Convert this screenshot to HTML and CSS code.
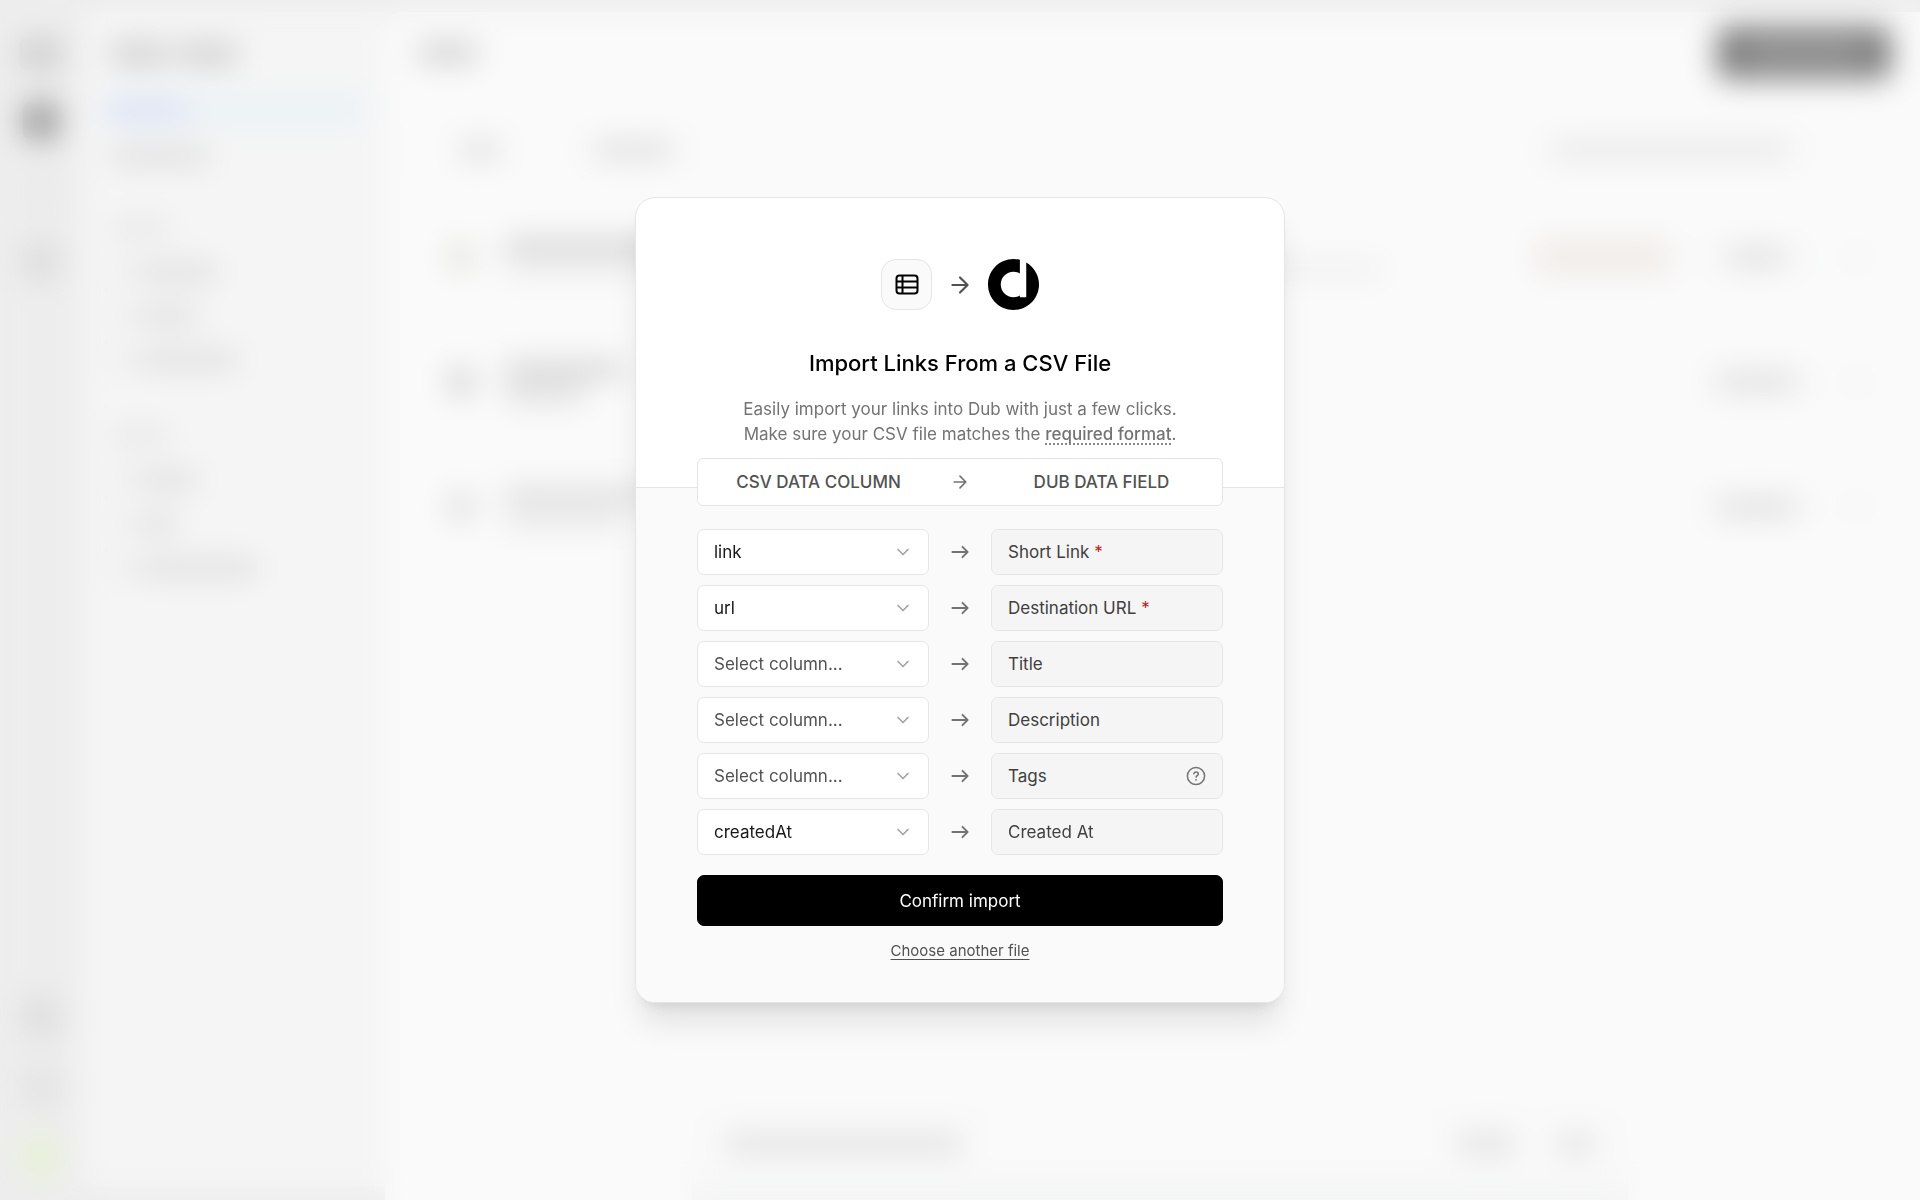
FILE: index.html
```html
<!DOCTYPE html>
<html lang="en">
<head>
<meta charset="UTF-8">
<meta name="viewport" content="width=device-width, initial-scale=1.0">
<title>Import Links From a CSV File</title>
<link rel="stylesheet" href="styles.css">
</head>
<body>

<!-- placeholder app behind the modal -->
<div class="app" aria-hidden="true">
    <div class="rail">
        <span class="blob logo"></span>
        <span class="blob active"></span>
        <span class="blob faint"></span>
        <span class="blob"></span>
        <span class="rail-space"></span>
        <span class="blob"></span>
        <span class="blob light"></span>
        <span class="blob avatar"></span>
    </div>
    <div class="sidebar">
        <div class="side-title"><span class="bar dark w60"></span><span class="bar dark w60"></span></div>
        <div class="side-item current"><span class="bar blue w80"></span></div>
        <div class="side-item"><span class="bar w100"></span></div>
        <div class="side-label"><span class="bar pale w60"></span></div>
        <div class="side-item"><span class="icon"></span><span class="bar w80"></span></div>
        <div class="side-item"><span class="icon"></span><span class="bar w60"></span></div>
        <div class="side-item"><span class="icon"></span><span class="bar w100"></span></div>
        <div class="side-label second"><span class="bar pale w60"></span></div>
        <div class="side-item"><span class="icon"></span><span class="bar w60"></span></div>
        <div class="side-item"><span class="icon"></span><span class="bar w40"></span></div>
        <div class="side-item"><span class="icon"></span><span class="bar w120"></span></div>
    </div>
    <div class="main">
        <div class="topbar">
            <span class="bar dark w60"></span>
            <span class="create"><span class="bar white w120"></span></span>
        </div>
        <div class="filters">
            <span class="filter"><span class="bar w40"></span></span>
            <span class="filter"><span class="bar w80"></span></span>
            <span class="search"><span class="bar pale w240"></span></span>
            <span class="more"></span>
        </div>
        <div class="link-row">
            <span class="thumb tan"></span>
            <div class="link-text"><span class="bar dark w200"></span><span class="bar long"></span></div>
            <span class="tag"></span>
            <span class="clicks"><span class="bar w60"></span></span>
            <span class="dots"></span>
        </div>
        <div class="link-row">
            <span class="thumb"></span>
            <div class="link-text"><span class="bar dark w120"></span><span class="bar w80"></span></div>
            <span class="clicks"><span class="bar w80"></span></span>
            <span class="dots"></span>
        </div>
        <div class="link-row">
            <span class="thumb grey"></span>
            <div class="link-text"><span class="bar w200"></span><span class="bar pale w120"></span></div>
            <span class="clicks"><span class="bar w80"></span></span>
            <span class="dots"></span>
        </div>
        <div class="pager">
            <span class="bar w240"></span>
            <span class="pager-space"></span>
            <span class="bar w60"></span>
            <span class="bar w40"></span>
        </div>
    </div>
</div>

<svg class="sprite" aria-hidden="true">
    <symbol id="arrow" viewBox="0 0 18 18">
        <path d="M2.75 9h12.5M11 4.75 15.25 9 11 13.25" fill="none" stroke="currentColor" stroke-width="1.5" stroke-linecap="round" stroke-linejoin="round"/>
    </symbol>
    <symbol id="arrow-bold" viewBox="0 0 24 24">
        <path d="M5 12h14M12 5l7 7-7 7" fill="none" stroke="currentColor" stroke-width="2" stroke-linecap="round" stroke-linejoin="round"/>
    </symbol>
    <symbol id="chevron" viewBox="0 0 24 24">
        <path d="m6 9 6 6 6-6" fill="none" stroke="currentColor" stroke-width="2" stroke-linecap="round" stroke-linejoin="round"/>
    </symbol>
</svg>

<div class="overlay">
    <div class="modal" role="dialog" aria-labelledby="modalTitle">
        <div class="modal-head">
            <div class="logos">
                <span class="file-icon">
                    <svg width="24" height="22" viewBox="0 0 24 22" fill="none" stroke="#000" stroke-width="2">
                        <rect x="1.5" y="1.5" width="21" height="18" rx="3"/>
                        <path d="M7.5 1.5v18M1.5 7.5h21M1.5 13.5h21"/>
                    </svg>
                </span>
                <svg class="logo-arrow" width="26" height="26"><use href="#arrow-bold"/></svg>
                <svg width="51" height="51" viewBox="0 0 64 64">
                    <path d="M32 64c17.673 0 32-14.327 32-32 0-11.844-6.435-22.186-16-27.719V48h-8v-2.14A15.93 15.93 0 0 1 32 48c-8.837 0-16-7.163-16-16s7.163-16 16-16c2.914 0 5.647.78 8 2.14V1.008A32 32 0 0 0 32 0C14.327 0 0 14.327 0 32s14.327 32 32 32Z"/>
                </svg>
            </div>
            <h3 id="modalTitle">Import Links From a CSV File</h3>
            <p>Easily import your links into Dub with just a few clicks.<br>
            Make sure your CSV file matches the <a href="#">required format</a>.</p>
        </div>

        <form class="modal-body">
            <div class="columns">
                <span>CSV DATA COLUMN</span>
                <svg class="arrow" width="20" height="20"><use href="#arrow-bold"/></svg>
                <span>DUB DATA FIELD</span>
            </div>

            <div class="fields">
                <div class="field-row">
                    <div class="select">
                        <select id="link"><option>link</option><option>url</option><option>createdAt</option></select>
                        <svg width="20" height="20"><use href="#chevron"/></svg>
                    </div>
                    <svg class="arrow" width="22" height="22"><use href="#arrow"/></svg>
                    <label for="link">Short Link <span class="required">*</span></label>
                </div>
                <div class="field-row">
                    <div class="select">
                        <select id="url"><option>url</option><option>link</option><option>createdAt</option></select>
                        <svg width="20" height="20"><use href="#chevron"/></svg>
                    </div>
                    <svg class="arrow" width="22" height="22"><use href="#arrow"/></svg>
                    <label for="url">Destination URL <span class="required">*</span></label>
                </div>
                <div class="field-row">
                    <div class="select">
                        <select id="title" class="empty"><option>Select column...</option></select>
                        <svg width="20" height="20"><use href="#chevron"/></svg>
                    </div>
                    <svg class="arrow" width="22" height="22"><use href="#arrow"/></svg>
                    <label for="title">Title</label>
                </div>
                <div class="field-row">
                    <div class="select">
                        <select id="description" class="empty"><option>Select column...</option></select>
                        <svg width="20" height="20"><use href="#chevron"/></svg>
                    </div>
                    <svg class="arrow" width="22" height="22"><use href="#arrow"/></svg>
                    <label for="description">Description</label>
                </div>
                <div class="field-row">
                    <div class="select">
                        <select id="tags" class="empty"><option>Select column...</option></select>
                        <svg width="20" height="20"><use href="#chevron"/></svg>
                    </div>
                    <svg class="arrow" width="22" height="22"><use href="#arrow"/></svg>
                    <label for="tags">Tags
                        <svg class="help" width="20" height="20" viewBox="0 0 20 20" fill="none" stroke="currentColor" stroke-width="1.5" stroke-linecap="round" stroke-linejoin="round">
                            <circle cx="10" cy="10" r="8.6"/>
                            <path d="M7.8 7.7C8.2 6.6 9 6.1 10.1 6.1c1.3 0 2.2.8 2.2 1.9 0 1.6-2.2 1.7-2.2 3.3"/>
                            <circle cx="10" cy="13.8" r=".9" fill="currentColor" stroke="none"/>
                        </svg>
                    </label>
                </div>
                <div class="field-row">
                    <div class="select">
                        <select id="createdAt"><option>createdAt</option><option>link</option><option>url</option></select>
                        <svg width="20" height="20"><use href="#chevron"/></svg>
                    </div>
                    <svg class="arrow" width="22" height="22"><use href="#arrow"/></svg>
                    <label for="createdAt">Created At</label>
                </div>
            </div>

            <button type="button" class="confirm">Confirm import</button>
            <button type="button" class="another">Choose another file</button>
        </form>
    </div>
</div>

</body>
</html>
```

FILE: styles.css
```css
* {
    box-sizing: border-box;
}
body {
    margin: 0;
    font-family: Inter, "Liberation Sans", sans-serif;
    font-size: 17px;
    color: #171717;
    background: #e5e5e5;
}
.sprite {
    display: none;
}

/* app behind the modal */
.app {
    display: flex;
    height: 100vh;
    padding-top: 12px;
    overflow: hidden;
}
.rail {
    display: flex;
    flex-direction: column;
    align-items: center;
    gap: 32px;
    width: 82px;
    padding: 26px 0 24px;
}
.blob {
    width: 36px;
    height: 38px;
    border-radius: 8px;
    background: #c4c4c4;
}
.blob.logo {
    height: 32px;
    width: 44px;
    background: #aaa;
}
.blob.active {
    background: #444;
}
.blob.faint {
    background: #e0e0e0;
}
.blob.light {
    background: #d0d0d0;
}
.blob.avatar {
    border-radius: 50%;
    background: #d6efaa;
}
.rail-space {
    flex: 1;
}
.sidebar {
    width: 303px;
    margin-bottom: 14px;
    padding: 18px 20px 0;
    border-radius: 16px 0 0 16px;
    background: #f5f5f5;
}
.bar {
    display: block;
    height: 16px;
    border-radius: 6px;
    background: #c0c0c0;
}
.bar.dark {
    background: #aaa;
}
.bar.pale {
    background: #d4d4d4;
}
.bar.white {
    background: #555;
}
.bar.blue {
    background: #b4c2f8;
}
.w40 { width: 40px; }
.w60 { width: 60px; }
.w80 { width: 80px; }
.w100 { width: 100px; }
.w120 { width: 120px; }
.w200 { width: 200px; }
.w240 { width: 240px; }
.side-title,
.side-item,
.side-label {
    display: flex;
    align-items: center;
    gap: 8px;
    height: 44px;
    padding-left: 8px;
}
.side-title {
    height: 48px;
    margin-bottom: 14px;
}
.side-title .bar {
    height: 22px;
}
.side-item.current {
    height: 36px;
    margin-bottom: 6px;
    padding-left: 4px;
    border-radius: 8px;
    background: #e3eff6;
}
.side-label {
    margin-top: 28px;
}
.side-label.second {
    margin-top: 32px;
}
.icon {
    width: 20px;
    height: 18px;
    background: #e0e0e0;
}
.main {
    position: relative;
    flex: 1;
    padding: 15px 29px 0 33px;
    border-radius: 16px 0 0 0;
    background: #fff;
}
.topbar {
    display: flex;
    justify-content: space-between;
    align-items: center;
}
.topbar > .bar {
    height: 20px;
}
.create {
    display: flex;
    align-items: center;
    justify-content: center;
    width: 174px;
    height: 52px;
    border-radius: 10px;
    background: #000;
}
.filters {
    display: flex;
    align-items: center;
    gap: 30px;
    margin-top: 46px;
}
.filter,
.search,
.more {
    display: flex;
    align-items: center;
    justify-content: center;
    height: 50px;
    border: 1px solid #e5e5e5;
    border-radius: 8px;
}
.filter {
    width: 124px;
}
.search {
    width: 280px;
    margin-left: auto;
}
.more {
    width: 50px;
}
.link-row {
    display: flex;
    align-items: center;
    gap: 28px;
    height: 125px;
    padding: 0 20px 0 28px;
    border-bottom: 1px solid #eee;
}
.filters + .link-row {
    margin-top: 20px;
}
.thumb {
    width: 30px;
    height: 30px;
    border-radius: 50%;
    background: #b4b4b4;
}
.thumb.tan {
    background: #d2d2c8;
}
.thumb.grey {
    background: #c8c8c8;
}
.link-text {
    display: grid;
    flex: 1;
    gap: 8px;
}
.long {
    width: 880px;
    height: 12px;
    background: #e0e0e0;
}
.tag {
    width: 136px;
    height: 36px;
    border-radius: 8px;
    background: #ebe2dc;
}
.clicks {
    display: flex;
    align-items: center;
    justify-content: center;
    width: 116px;
    height: 34px;
    border: 2px solid #e4e9f0;
    border-radius: 8px;
}
.dots {
    width: 12px;
    height: 24px;
    margin: 0 8px;
    background: #eee;
}
.pager {
    position: absolute;
    left: 20%;
    right: 19%;
    bottom: 0;
    display: flex;
    align-items: center;
    gap: 40px;
    height: 90px;
    padding: 0 30px;
    border: 2px solid #e5e5e5;
    border-bottom: 24px solid #f4f5f6;
    border-radius: 16px 16px 0 0;
}
.pager-space {
    flex: 1;
}

/* modal */
.overlay {
    position: fixed;
    inset: 0;
    display: flex;
    align-items: center;
    justify-content: center;
    background: rgba(245, 245, 245, 0.5);
    backdrop-filter: blur(15px);
}
.modal {
    width: 100%;
    max-width: 650px;
    overflow: hidden;
    border: 1px solid #e5e5e5;
    border-radius: 20px;
    background: #fff;
    box-shadow: 0 25px 32px -6px rgba(0, 0, 0, 0.1), 0 10px 13px -8px rgba(0, 0, 0, 0.1);
}
.modal-head {
    padding: 61px 60px 40px;
    border-bottom: 1px solid #e5e5e5;
    text-align: center;
}
.logos {
    display: flex;
    align-items: center;
    justify-content: center;
    gap: 15px;
}
.file-icon {
    display: flex;
    align-items: center;
    justify-content: center;
    width: 51px;
    height: 51px;
    border: 1px solid #e5e5e5;
    border-radius: 15px;
    background: #fafafa;
}
.logo-arrow {
    color: #525252;
}
.modal-head h3 {
    margin: 37px 0 18px;
    font-size: 22px;
    font-weight: 500;
    line-height: 32px;
    color: #000;
}
.modal-head p {
    margin: 0;
    line-height: 25px;
    color: #737373;
}
.modal-head a {
    font-weight: 500;
    color: inherit;
    text-decoration: underline dotted;
    text-underline-offset: 4px;
}
.modal-body {
    display: flex;
    flex-direction: column;
    padding: 0 61px 40px;
    background: #fafafa;
}
.columns,
.field-row {
    display: grid;
    grid-template-columns: 1fr 62px 1fr;
    align-items: center;
    justify-items: center;
}
.columns {
    position: relative;
    height: 48px;
    margin-top: -30px;
    padding: 0 10px;
    border: 1px solid #e5e5e5;
    border-radius: 6px;
    background: #fff;
    font-weight: 500;
    color: #525252;
}
.fields {
    display: grid;
    gap: 10px;
    margin: 23px 0 20px;
}
.select {
    position: relative;
    width: 100%;
}
.select select {
    display: block;
    width: 100%;
    height: 46px;
    padding: 0 40px 0 16px;
    border: 1px solid #e5e5e5;
    border-radius: 7px;
    background: #fff;
    font: inherit;
    color: #171717;
    appearance: none;
}
.select select.empty {
    color: #525252;
}
.select svg {
    position: absolute;
    top: 13px;
    right: 16px;
    color: #a3a3a3;
    pointer-events: none;
}
.arrow {
    color: #737373;
}
.field-row label {
    display: flex;
    align-items: center;
    gap: 5px;
    width: 100%;
    height: 46px;
    padding: 0 16px;
    border: 1px solid #e5e5e5;
    border-radius: 7px;
    background: #f5f5f5;
    color: #404040;
}
.required {
    color: #b91c1c;
}
.help {
    margin-left: auto;
    color: #737373;
}
.confirm {
    height: 51px;
    border: 1px solid #000;
    border-radius: 7px;
    background: #000;
    font: inherit;
    color: #fff;
}
.another {
    align-self: center;
    margin-top: 14px;
    padding: 0;
    border: 0;
    background: none;
    font: inherit;
    font-size: 15px;
    line-height: 22px;
    color: #525252;
    text-decoration: underline;
    text-underline-offset: 3px;
}
```
